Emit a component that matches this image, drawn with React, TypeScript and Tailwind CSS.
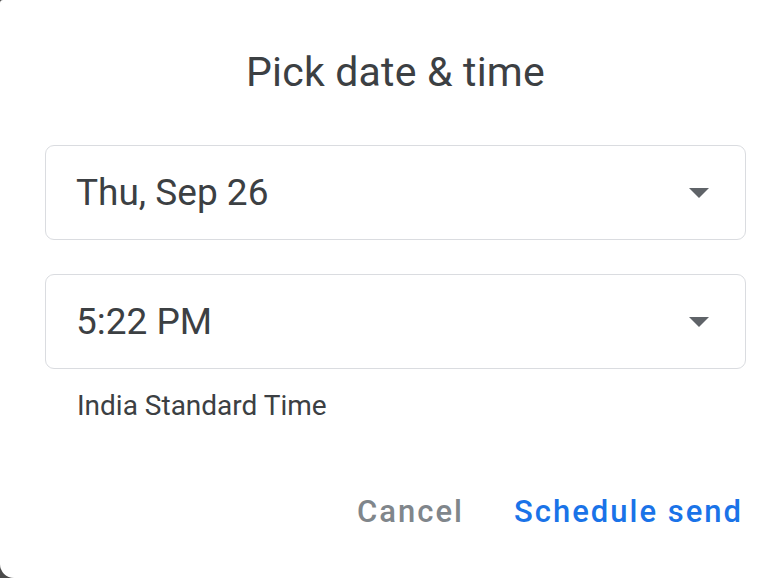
export default function App() {
  return (
    <div className="h-[578px] w-[782px] bg-[#4b4b4b]">
      <div
        className="flex h-full w-full flex-col rounded-bl-[14px] rounded-tl-[3px] bg-white"
        style={{ fontFamily: "Roboto, 'Noto Sans', sans-serif" }}
      >
        <h1 className="mt-[47px] pl-[9px] text-center text-[41px] leading-[50px] tracking-[0.2px] text-[#3c4043]">
          Pick date &amp; time
        </h1>

        <div className="mt-[48px] flex flex-col gap-[34px] pl-[45px] pr-[36px]">
          <Field value="Thu, Sep 26" />
          <Field value="5:22 PM" />
        </div>

        <div className="mt-[20px] pl-[77px] text-[28px] leading-[34px] text-[#3c4043]">
          India Standard Time
        </div>

        <div className="mt-[70px] flex justify-end gap-[50px] pr-[39px] text-[31px] font-medium leading-[38px] tracking-[2px]">
          <button className="text-[#80868b]">Cancel</button>
          <button className="text-[#1a73e8]">Schedule send</button>
        </div>
      </div>
    </div>
  )
}

function Field({ value }: { value: string }) {
  return (
    <div className="flex h-[95px] items-center justify-between rounded-[9px] border-[1.5px] border-[#dadce0] pl-[30px] pr-[36px]">
      <span className="text-[37px] leading-[44px] text-[#3c4043]">{value}</span>
      <svg width="20" height="10" viewBox="0 0 20 10" className="mt-[1px]">
        <path d="M0 0h20L10 10z" fill="#5f6368" />
      </svg>
    </div>
  )
}
